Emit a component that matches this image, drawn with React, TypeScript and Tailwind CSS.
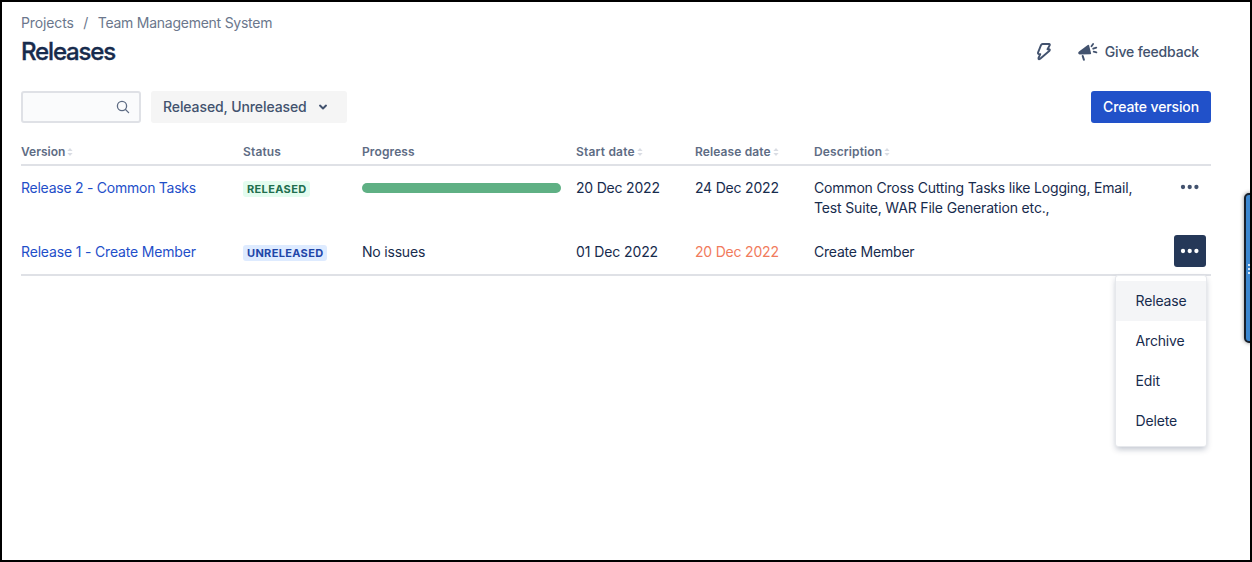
import React from "react";

const cols =
  "grid grid-cols-[222px_119px_214px_119px_119px_360px_37px] w-[1190px]";

function SortIcon() {
  return (
    <svg width="6" height="8" viewBox="0 0 6 8" className="ml-[2px] shrink-0" fill="#d9dce3">
      <path d="M3 0L5.6 3H.4z" />
      <path d="M3 8L5.6 5H.4z" />
    </svg>
  );
}

function Head({ label, sortable, track }: { label: string; sortable?: boolean; track: string }) {
  return (
    <div className="flex items-center">
      <span className={track}>{label}</span>
      {sortable && <SortIcon />}
    </div>
  );
}

function Dots() {
  return (
    <svg width="20" height="6" viewBox="0 0 20 6" fill="currentColor">
      <circle cx="3" cy="3" r="2.15" />
      <circle cx="9.7" cy="3" r="2.15" />
      <circle cx="16.4" cy="3" r="2.15" />
    </svg>
  );
}

function MenuItem({ label, active }: { label: string; active?: boolean }) {
  return (
    <button
      className={
        active
          ? "flex h-10 w-full items-center bg-[#f4f5f7] pl-[19.5px] text-left tracking-[-0.15px]"
          : "flex h-10 w-full items-center pl-[19.5px] text-left tracking-[-0.15px]"
      }
    >
      {label}
    </button>
  );
}

export default function App() {
  return (
    <div className="relative flex h-[562px] w-[1252px] flex-col overflow-hidden border-2 border-black bg-white pl-[19px] font-['Inter',sans-serif] text-[14px] leading-5 text-[#172b4d]">
      <nav className="mt-[11px] flex h-5 items-center text-[#6b778c]">
        <span className="tracking-[-0.13px]">Projects</span>
        <span className="w-6 text-center">/</span>
        <span className="tracking-[-0.25px]">Team Management System</span>
      </nav>

      <header className="mt-[2px] flex h-[34px] w-[1178px] items-center justify-between">
        <h1 className="text-[24px] font-medium leading-7 tracking-[-1.15px] [-webkit-text-stroke:0.35px_currentColor]">Releases</h1>
        <div className="flex items-center text-[#42526e]">
          <svg width="16" height="20" viewBox="0 0 16 20" fill="none" stroke="currentColor" strokeWidth="1.9" strokeLinejoin="round" strokeLinecap="round" className="mr-[26px]">
            <path d="M6.6 2H13Q14.2 2.1 13.7 3.3L11.5 7.3H13.1Q14.4 7.6 13.5 8.8L4.2 16.8Q2.2 18 2.5 16L4.3 12.2H3.2Q1.7 12 2 10.6L5 3.2Q5.5 2 6.6 2Z" />
          </svg>
          <svg width="20" height="20" viewBox="0 0 20 20" className="mr-[7px]" stroke="currentColor" fill="none" strokeWidth="1.8" strokeLinecap="round">
            <path d="M1 9.4L9.8 2.9Q10.8 2.4 11.1 3.4L13.1 11.2Q13.2 12.2 12.2 12.3L1.6 12.5Q.3 12.3 .2 11Q.2 10 1 9.4Z" fill="currentColor" stroke="none" />
            <path d="M4.7 14L5.9 17.8" strokeWidth="2" />
            <path d="M13.5 4.2L15.1 1.9M15.2 6.7L18.3 5.6M15.7 9.7L18.4 10.4" />
          </svg>
          <span className="font-medium tracking-[-0.17px]">Give feedback</span>
        </div>
      </header>

      <div className="mt-[22px] flex h-8 w-[1190px] items-center">
        <div className="flex h-8 w-[120px] items-center justify-end rounded-[3px] border-2 border-[#dfe1e6] bg-[#fafbfc] pr-[9px]">
          <svg width="14" height="14" viewBox="0 0 14 14" fill="none" stroke="#5e6c84" strokeWidth="1.3" strokeLinecap="round">
            <circle cx="6" cy="6" r="4.6" />
            <path d="M9.5 9.5L12.6 12.6" />
          </svg>
        </div>
        <button className="ml-[10px] flex h-8 w-[196px] items-center rounded-[3px] bg-[#f5f5f5] pl-3 font-medium text-[#42526e]">
          <span className="tracking-[-0.1px]">Released, Unreleased</span>
          <svg width="10" height="8" viewBox="0 0 10 8" className="ml-[11px]" fill="none" stroke="currentColor" strokeWidth="2" strokeLinecap="round" strokeLinejoin="round">
            <path d="M2 2.6L5 5.4L8 2.6" />
          </svg>
        </button>
        <button className="ml-auto h-8 w-[120px] rounded-[3px] bg-[#2151c9] text-center font-medium tracking-[-0.12px] text-white">
          Create version
        </button>
      </div>

      <section className="mt-[19px] w-[1190px]">
        <div className={`${cols} h-6 border-b-2 border-[#dfe1e6] pb-[2px] text-[12px] font-semibold leading-4 text-[#5e6c84]`}>
          <Head label="Version" sortable track="tracking-[0px]" />
          <Head label="Status" track="tracking-[0.15px]" />
          <Head label="Progress" track="tracking-[0.12px]" />
          <Head label="Start date" sortable track="tracking-[0.2px]" />
          <Head label="Release date" sortable track="tracking-[0.12px]" />
          <Head label="Description" sortable track="tracking-[0.12px]" />
        </div>

        <div className={`${cols} h-16 pt-3`}>
          <a className="tracking-[-0.25px] text-[#1f4fc9]">Release 2 - Common Tasks</a>
          <div>
            <span className="mt-[3px] inline-block h-4 rounded-[3px] bg-[#e3fcef] px-1 align-top text-[11px] font-bold leading-4 tracking-[0.35px] text-[#216e4e]">RELEASED</span>
          </div>
          <div className="mt-[5px] h-[10px] w-[199px] rounded-full bg-[#5fb084]" />
          <span className="tracking-[-0.2px]">20 Dec 2022</span>
          <span className="tracking-[-0.2px]">24 Dec 2022</span>
          <p className="w-[330px] tracking-[-0.19px]">
            Common Cross Cutting Tasks like Logging, Email,
            <br />
            <span className="tracking-[-0.16px]">Test Suite, WAR File Generation etc.,</span>
          </p>
          <button className="-mt-[7px] flex h-8 w-8 items-center justify-center text-[#42526e]"><Dots /></button>
        </div>

        <div className={`${cols} h-[46px] border-b-2 border-[#dfe1e6] pt-3`}>
          <a className="tracking-[-0.17px] text-[#1f4fc9]">Release 1 - Create Member</a>
          <div>
            <span className="mt-[3px] inline-block h-4 rounded-[3px] bg-[#deebff] px-1 align-top text-[11px] font-bold leading-4 tracking-[0.33px] text-[#1f46a8]">UNRELEASED</span>
          </div>
          <span className="tracking-[-0.2px]">No issues</span>
          <span className="tracking-[-0.1px]">01 Dec 2022</span>
          <span className="tracking-[-0.2px] text-[#f17b5c]">20 Dec 2022</span>
          <span className="tracking-[-0.2px]">Create Member</span>
          <div className="relative -mt-[7px] h-8 w-8">
            <button className="flex h-8 w-8 items-center justify-center rounded-[3px] bg-[#253858] text-white"><Dots /></button>
            <div className="absolute right-[-1px] top-10 z-10 w-[92px] rounded-[3px] border border-[#e6e8ec] bg-white py-[5px] shadow-[0_3px_6px_-1px_rgba(9,30,66,0.28)]">
              <MenuItem label="Release" active />
              <MenuItem label="Archive" />
              <MenuItem label="Edit" />
              <MenuItem label="Delete" />
            </div>
          </div>
        </div>
      </section>

      <div className="absolute right-[-6px] top-[191px] h-[150px] w-[12px] rounded-[5px] border-2 border-[#17202c] bg-[#3c87d0] shadow-[0_0_4px_rgba(0,0,0,0.45)]">
        <div className="absolute left-[2px] top-[69px] flex flex-col gap-[2px]">
          <i className="block h-[2px] w-[2px] bg-[#d5e6f7]" />
          <i className="block h-[2px] w-[2px] bg-[#d5e6f7]" />
          <i className="block h-[2px] w-[2px] bg-[#d5e6f7]" />
        </div>
      </div>
    </div>
  );
}
